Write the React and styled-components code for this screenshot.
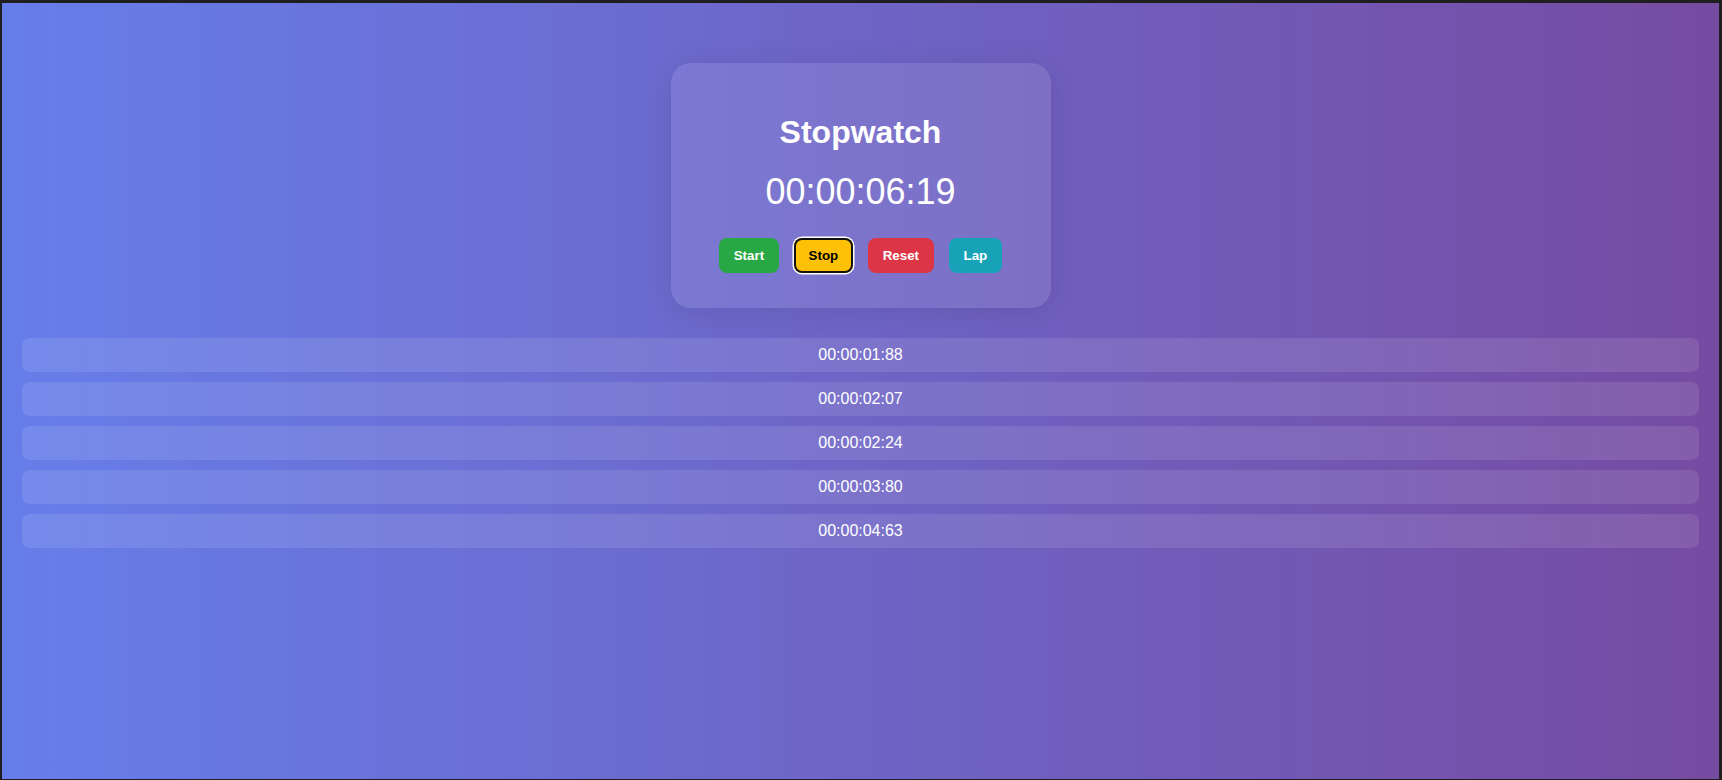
import React from 'react';
import styled, { createGlobalStyle } from 'styled-components';

const GlobalStyle = createGlobalStyle`
  html, body {
    margin: 0;
    padding: 0;
    background: #1f1f1f;
  }
  body {
    font-family: "Liberation Sans", Arial, sans-serif;
  }
`;

const laps = ['00:00:01:88', '00:00:02:07', '00:00:02:24', '00:00:03:80', '00:00:04:63'];

const buttons = [
  { label: 'Start', bg: '#28a745', color: '#fff' },
  { label: 'Stop', bg: '#ffc107', color: '#000', focused: true },
  { label: 'Reset', bg: '#dc3545', color: '#fff' },
  { label: 'Lap', bg: '#17a2b8', color: '#fff' },
];

const App = () => {
  return (
    <>
      <GlobalStyle />
      <Page>
        <Card>
          <Title>Stopwatch</Title>
          <Timer>00:00:06:19</Timer>
          <Controls>
            {buttons.map((b) => (
              <Button key={b.label} $bg={b.bg} $color={b.color} $focused={b.focused}>
                {b.label}
              </Button>
            ))}
          </Controls>
        </Card>
        <LapList>
          {laps.map((lap, index) => (
            <LapRow key={index}>{lap}</LapRow>
          ))}
        </LapList>
      </Page>
    </>
  );
};

const Page = styled.div`
  margin: 3px 3px 1px 2px;
  height: 776px;
  box-sizing: border-box;
  padding: 60px 20px;
  background: linear-gradient(to right, #667eea 0%, #764ba2 100%);
  color: #fff;
`;

const Card = styled.div`
  width: 380px;
  box-sizing: border-box;
  margin: 0 auto 30px;
  padding: 25px 20px 35px;
  text-align: center;
  border-radius: 20px;
  background: rgba(255, 255, 255, 0.1);
  box-shadow: 0 4px 30px rgba(0, 0, 0, 0.1);
`;

const Title = styled.h1`
  font-size: 32px;
  font-weight: bold;
  margin: 25.5px 0 20.5px;
  line-height: normal;
`;

const Timer = styled.div`
  font-size: 36px;
  line-height: normal;
  margin-bottom: 25px;
`;

const Controls = styled.div`
  display: flex;
  justify-content: center;
  gap: 14.5px;
`;

const Button = styled.button`
  font-family: "Liberation Sans", Arial, sans-serif;
  font-size: 13.33px;
  font-weight: bold;
  line-height: normal;
  padding: 10px 15px;
  border: none;
  border-radius: 8px;
  background: ${(p) => p.$bg};
  color: ${(p) => p.$color};
  cursor: pointer;
  box-shadow: ${(p) => (p.$focused ? 'inset 0 0 0 2px #111, 0 0 0 1.5px #fff' : 'none')};
`;

const LapList = styled.div`
  display: flex;
  flex-direction: column;
  gap: 10px;
`;

const LapRow = styled.div`
  padding: 8px;
  font-size: 16px;
  line-height: 18px;
  text-align: center;
  border-radius: 8px;
  background: rgba(255, 255, 255, 0.1);
`;

export default App;
